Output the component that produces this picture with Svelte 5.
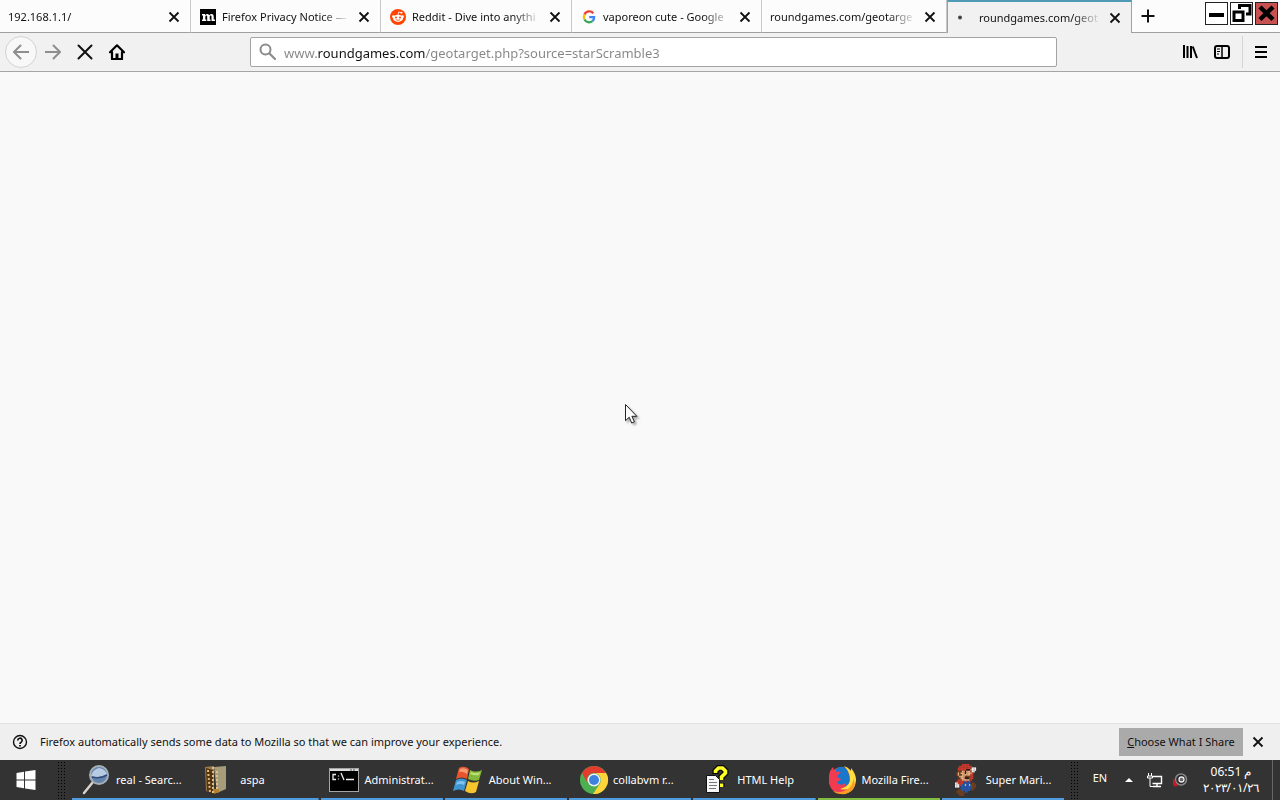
<script>
  const tabs = [
    { title: '192.168.1.1/', icon: '' },
    { title: 'Firefox Privacy Notice —', icon: 'mozilla' },
    { title: 'Reddit - Dive into anythi', icon: 'reddit' },
    { title: 'vaporeon cute - Google', icon: 'google' },
    { title: 'roundgames.com/geotarge', icon: '' },
    { title: 'roundgames.com/geot', icon: 'busy', active: true }
  ];
  const tasks = [
    { title: 'real - Searc...', icon: 'search', joined: true },
    { title: 'aspa', icon: 'archive' },
    { title: 'Administrat...', icon: 'cmd' },
    { title: 'About Win...', icon: 'windows' },
    { title: 'collabvm r...', icon: 'chrome' },
    { title: 'HTML Help', icon: 'help' },
    { title: 'Mozilla Fire...', icon: 'firefox', active: true },
    { title: 'Super Mari...', icon: 'mario' }
  ];
  const mario = [
    '.....rrrrr......',
    '...rrrrrrrrr....',
    '..rrrrrrrrrrwww.',
    '..rrrrrrkkkswww.',
    '..bbbssksssrww..',
    '.bsbssskssssr...',
    '.bsbbssssssrr...',
    '..bssssbbbbrr...',
    '....ssskkkrrr...',
    '..rrrsssssrr....',
    '.rrrrrurrur.....',
    'wwrrrruuuuu.bb..',
    'wwwrruuyuuyubbb.',
    'www.uuuuuuuubbb.',
    '....uuuuuuuubb..',
    '..bbbuuuuuu.b...',
    '.bbbbb.uu.......',
    '..bbbbb.........',
    '...bbb..........'
  ];
  const inks = { r: '#cf3a2c', w: '#f4eeee', b: '#74401f', s: '#eeb080', k: '#2a1610', u: '#2458b4', y: '#f6d743' };
  let url = $state('www.roundgames.com/geotarget.php?source=starScramble3');
</script>

{#snippet cross(size)}
  <svg width={size} height={size} viewBox="0 0 12 12" aria-hidden="true"><path d="M1.500 1.500l9 9M10.500 1.500l-9 9" stroke="#111" stroke-width="1.800" /></svg>
{/snippet}

<div class="screen">
  <header class="tabstrip">
    <div class="tabs">
      {#each tabs as tab}
        <div class="tab" class:active={tab.active}>
          <button class="tab-main">
            {#if tab.icon}
              <svg class="favicon" width="16" height="16" viewBox="0 0 16 16" aria-hidden="true">
                {#if tab.icon === 'mozilla'}
                  <path d="M0 0h16v16H0z" fill="#000" />
                  <path d="M2 5h3v1.200Q6.300 4.800 7.600 5q1.300.2 1.600 1.300Q10.500 4.800 12 5q1.700.2 1.700 2.200v3.300H15V12h-3.500V7.600q0-1-.8-1-1 0-1 1.400v2.500h.8V12H7.200V7.600q0-1-.8-1-1 0-1.100 1.400v2.500h1V12H2v-1.500h1V6.500H2z" fill="#fff" />
                {:else if tab.icon === 'reddit'}
                  <circle cx="8" cy="8" r="8" fill="#ff4500" />
                  <path d="M8 6l.7-3 2.500.6" fill="none" stroke="#fff" stroke-width=".8" />
                  <circle cx="11.500" cy="3.700" r="1" fill="#fff" />
                  <circle cx="3.500" cy="7.700" r="1.400" fill="#fff" />
                  <circle cx="12.500" cy="7.700" r="1.400" fill="#fff" />
                  <ellipse cx="8" cy="9.300" rx="5" ry="3.600" fill="#fff" />
                  <circle cx="6" cy="8.500" r="1" fill="#ff4500" />
                  <circle cx="10" cy="8.500" r="1" fill="#ff4500" />
                  <path d="M5.800 10.700q2.200 1.400 4.400 0" fill="none" stroke="#ff4500" stroke-width=".8" />
                {:else if tab.icon === 'google'}
                  <g fill="none" stroke-width="2.300">
                    <path d="M12.300 4.200A5.200 5.200 0 0 0 3.500 5.500" stroke="#ea4335" />
                    <path d="M3.500 5.500a5.200 5.200 0 0 0 0 5" stroke="#fbbc05" />
                    <path d="M3.500 10.500a5.200 5.200 0 0 0 7.900 1.700" stroke="#34a853" />
                    <path d="M11.400 12.200A5 5 0 0 0 13.100 8.200H8.200" stroke="#4285f4" />
                  </g>
                {:else}
                  <circle cx="3" cy="7.500" r="2" fill="#444" />
                {/if}
              </svg>
            {/if}
            <span class="tab-title">{tab.title}</span>
          </button>
          <button class="close" aria-label="Close tab">{@render cross(12)}</button>
        </div>
      {/each}
    </div>
    <div class="strip-end">
      <button class="new-tab" aria-label="New tab">
        <svg width="14" height="14" viewBox="0 0 14 14"><path d="M7 .5v13M.5 7h13" stroke="#111" stroke-width="2" /></svg>
      </button>
      <div class="window-buttons">
        <button aria-label="Minimize"><svg width="21" height="21" viewBox="0 0 21 21"><path d="M3 10h15v4H3z" /></svg></button>
        <button aria-label="Restore">
          <svg width="21" height="21" viewBox="0 0 21 21" fill="none" stroke="#000" stroke-width="3"><path d="M3 9h9v8.500H3z" /><path d="M8.500 6V2.500H19V11h-4" /></svg>
        </button>
        <button class="quit" aria-label="Close"><svg width="21" height="21" viewBox="0 0 21 21"><path d="M4 4l13 12.500M17 4L4 16.500" stroke="#000" stroke-width="4.500" /></svg></button>
      </div>
    </div>
  </header>

  <nav class="toolbar">
    <button class="tool back" aria-label="Back"><svg width="16" height="16" viewBox="0 0 16 16"><path d="M15.500 8H1.500M7.500 1.500L1 8l6.500 6.500" /></svg></button>
    <button class="tool forward" aria-label="Forward"><svg width="16" height="16" viewBox="0 0 16 16"><path d="M.5 8h14M8.500 1.500L15 8l-6.500 6.500" /></svg></button>
    <button class="tool" aria-label="Stop"><svg width="16" height="16" viewBox="0 0 16 16"><path d="M1.500 1.500l13 13M14.500 1.500l-13 13" stroke="#111" stroke-width="2" stroke-linecap="round" /></svg></button>
    <button class="tool" aria-label="Home">
      <svg width="16" height="16" viewBox="0 0 16 16"><path d="M1 8.300L8 1.300l7 7M3 8v7h10V8" fill="none" stroke="#000" stroke-width="2.200" stroke-linecap="round" stroke-linejoin="round" /><path d="M6.500 15V9.500h3V15z" /></svg>
    </button>
    <div class="spring"></div>
    <label class="urlbar">
      <svg width="18" height="18" viewBox="0 0 18 18" aria-hidden="true"><circle cx="6.500" cy="6.500" r="5" fill="none" stroke="#8b8b8b" stroke-width="2" /><path d="M10.500 10.500l5.500 5.500" stroke="#8b8b8b" stroke-width="2.200" stroke-linecap="round" /></svg>
      <input type="text" aria-label="Address" bind:value={url} spellcheck="false" />
    </label>
    <div class="spring"></div>
    <button class="tool" aria-label="Library">
      <svg width="16" height="16" viewBox="0 0 16 16" stroke="#000" stroke-width="2"><path d="M2 1v13M5.500 2v12M9 2v12" /><path d="M10.700 2.500l4.300 11.500" /></svg>
    </button>
    <button class="tool" aria-label="Sidebars">
      <svg width="16" height="16" viewBox="0 0 16 16" fill="none" stroke="#000"><rect x="1" y="2" width="14" height="12" rx="2" stroke-width="2" /><path d="M8 2v12" stroke-width="1.500" /><path d="M3 5h3M3 7.500h3M3 10h2" /></svg>
    </button>
    <div class="divider"></div>
    <button class="tool menu" aria-label="Menu"><svg width="16" height="16" viewBox="0 0 16 16"><path d="M2 3h12M2 8h12M2 13h12" stroke="#000" stroke-width="2" /></svg></button>
  </nav>

  <main>
    <svg class="cursor" width="17" height="24" viewBox="0 0 17 24" aria-hidden="true">
      <path d="M.5.5v16.200l3.700-3.500 2.500 5.800 2.700-1.200-2.500-5.500h5z" fill="#fff" stroke="#222" />
    </svg>
  </main>

  <section class="notice">
    <svg width="16" height="16" viewBox="0 0 16 16" fill="none" stroke="#111" aria-hidden="true"><circle cx="8" cy="8" r="6.500" stroke-width="1.400" /><path d="M5.800 6.500a2.200 2.200 0 1 1 3.300 1.800Q8 8.900 8 10" stroke-width="1.700" /><path d="M8 11v1.500" stroke-width="1.800" /></svg>
    <p>Firefox automatically sends some data to Mozilla so that we can improve your experience.</p>
    <button class="choose"><span><u>C</u>hoose What I Share</span></button>
    <button class="close" aria-label="Dismiss">{@render cross(12)}</button>
  </section>

  <footer class="taskbar">
    <button class="start" aria-label="Start">
      <svg width="20" height="20" viewBox="0 0 20 20" fill="#fff"><path d="M.5 3l7.500-1.200v7.700H.5zM9 1.600L19.500 0v9.500H9zM.5 10.500H8v7.700L.5 17zM9 10.500h10.500V20L9 18.400z" /></svg>
    </button>
    <div class="grip"></div>
    <div class="tasks">
      {#each tasks as task}
        <button class="task" class:active={task.active} class:joined={task.joined}>
          <svg width="32" height="32" viewBox="0 0 32 32" aria-hidden="true">
            {#if task.icon === 'search'}
              <path d="M13 18L4 29" stroke="#d8d4cc" stroke-width="2.500" stroke-linecap="round" />
              <circle cx="19" cy="11" r="9" fill="#6284ad" stroke="#a7b0b8" stroke-width="2" />
              <path d="M11 12q2-7 8-8 6 1 8 6-7 5-16 2z" fill="#b7cce2" />
              <path d="M12 13q8 2 15-2" fill="none" stroke="#334b7a" stroke-width="1.500" />
            {:else if task.icon === 'archive'}
              <path d="M1 3l9-1v27l-8-2z" fill="#9c7b50" />
              <path d="M10 3l12-1v23l-9 4z" fill="#a69c79" />
              <path d="M2 4l7 2v24l-6-3z" fill="#543411" />
              <path d="M4 6l2 22M9 3v26M13 7v21" stroke="#e1bf84" stroke-width="2" stroke-dasharray="2 2" />
              <path d="M10 25h5v3l-5 2z" fill="#b5822d" />
            {:else if task.icon === 'cmd'}
              <path d="M0 4h30v24H0z" fill="#a5a5a5" /><path d="M1 7h28v20H1z" fill="#000" />
              <path d="M1 5h28v2H1z" fill="#ddd" /><path d="M22 5v2M25 5v2" stroke="#555" />
              <path d="M7 10.500H4v5h3M9.500 11.500v1M9.500 14.500v1M12 9l3 7M17 15.500h8" fill="none" stroke="#eee" stroke-width="1.300" />
            {:else if task.icon === 'windows'}
              <path d="M6 4q5-3 10 1l-2 10q-5-3-11 0z" fill="#e8552d" />
              <path d="M17 6q6 3 12 0l-3 10q-5 2-11-1z" fill="#83b83b" />
              <path d="M3 16q5-3 11 0l-3 11q-5-3-11 0z" fill="#3e95d1" />
              <path d="M15 17q5 3 11 0l-3 11q-5 3-11-1z" fill="#f6c52d" />
              <path d="M7 5q4-2 8 1l-1 4q-4-3-8-2z" fill="#f69a70" />
              <path d="M18 8q4 2 9 0l-1 3q-4 1-9-1z" fill="#bedf72" />
              <path d="M4 18q5-2 8 0l-1 3q-4-2-8 0z" fill="#7fc4ee" />
            {:else if task.icon === 'chrome'}
              <circle cx="17" cy="16" r="14" fill="#4caf50" />
              <path d="M4.900 9A14 14 0 0 1 29.100 9H17a7 7 0 0 0-6.100 10.500z" fill="#e33b2e" />
              <path d="M29.100 9A14 14 0 0 1 16 30l7-10.500A7 7 0 0 0 17 9z" fill="#ffd43b" />
              <circle cx="17" cy="16" r="6.500" fill="#f4f4f4" /><circle cx="17" cy="16" r="5" fill="#3e82df" />
            {:else if task.icon === 'help'}
              <path d="M14.500 10V7l3-3h4l3 3v2l-4 4v3M20.500 19v4" fill="none" stroke="#050500" stroke-width="6" />
              <path d="M14.500 9V7l3-3h4l3 3v2l-4 4v3M20.500 19.500v3.500" fill="none" stroke="#ffff28" stroke-width="3.600" />
              <path d="M5.500 11.500h9l4 4v13h-13z" fill="#f7f7f7" stroke="#111" />
              <path d="M8 15.500h5M8 18.500h8M8 21.500h8M8 24.500h7" stroke="#777" />
            {:else if task.icon === 'firefox'}
              <circle cx="16" cy="16" r="13" fill="#f0503a" />
              <path d="M10 5q6-5 12 1l2 12q-5 7-11 4-5-6-3-17z" fill="#1a78cc" />
              <path d="M18 2q4 1 7 5v-3q5 6 5 12-1 13-13 14Q7 29 4 20q6 5 12 4 9-2 8-11-1-6-6-11z" fill="#ffe040" />
              <path d="M3 13q0-6 4-10 0 3 3 5 3-1 5 0l-3 3-1 2 4 2q-2 3-5 3 4 5 10 1-1 5-6 6 4 1 8 0-4 5-10 4Q2 26 3 13z" fill="#f23b50" />
              <path d="M7 27q8 3 15-2 6-5 5-11 4 8-1 12-5 5-11 4-5 0-8-3z" fill="#ff9a24" />
            {:else}
              {#each mario as line, y}
                {#each [...line] as ink, x}
                  {#if inks[ink]}<rect x={5 + x * 1.4} y={y * 1.68} width="1.500" height="1.780" fill={inks[ink]} />{/if}
                {/each}
              {/each}
            {/if}
          </svg>
          <span>{task.title}</span>
        </button>
      {/each}
    </div>
    <div class="grip tail"></div>
    <button class="lang">EN</button>
    <div class="tray">
      <button aria-label="Show hidden icons"><svg width="8" height="8" viewBox="0 0 8 8"><path d="M0 6l4-4 4 4z" fill="#fff" /></svg></button>
      <button aria-label="Network">
        <svg width="16" height="16" viewBox="0 0 16 16" fill="none" stroke="#fff"><path d="M6 4.500h8.500v7H5.500M10 12v2M6 14.500h8" stroke-width="1.400" /><path d="M1.500 1v3M4.500 1v3M.5 4h5v2h-5zM3 6v8.500h3" /></svg>
      </button>
      <button aria-label="Volume">
        <svg width="16" height="16" viewBox="0 0 16 16"><circle cx="8" cy="7.500" r="5.500" fill="#272727" stroke="#888" stroke-width="1.500" /><circle cx="8.500" cy="7.500" r="2.500" fill="#666" stroke="#eee" stroke-width="1.300" /><path d="M0 7q1 0 2 1 0 3 3 5-1 2-3 1.500-3-1-2-7.500z" fill="#c81828" /></svg>
      </button>
    </div>
    <button class="clock"><span>06:51 م</span><span>٢٠٢٣/٠١/٢٦</span></button>
    <button class="desktop" aria-label="Show desktop"></button>
  </footer>
</div>

<style>
  :global(body) { margin: 0; }
  .screen {
    display: flex;
    flex-direction: column;
    min-height: 100vh;
    background: #f9f9f9;
    color: #111;
    font: 11px/16px "Noto Sans", "Open Sans", sans-serif;
  }
  button {
    display: flex;
    align-items: center;
    justify-content: center;
    box-sizing: border-box;
    margin: 0;
    padding: 0;
    border: 0;
    background: none;
    color: inherit;
    font: inherit;
    white-space: nowrap;
  }
  svg { display: block; flex: none; }

  .tabstrip { display: flex; height: 33px; background: #fcfcfc; }
  .tabs {
    display: grid;
    flex: 1;
    min-width: 0;
    grid-template-columns: minmax(0, 191fr) minmax(0, 190fr) minmax(0, 191fr) minmax(0, 190fr) minmax(0, 185fr) minmax(0, 185fr);
  }
  .tab {
    display: flex;
    align-items: center;
    box-sizing: border-box;
    min-width: 0;
    padding: 1px 8px 0;
    border-right: 1px solid #c8c8c8;
    border-bottom: 1px solid #a0a0a0;
  }
  .tab.active {
    padding-top: 0;
    border-top: 2px solid #4f9bb5;
    border-bottom: 0;
    border-left: 1px solid #a0a0a0;
    border-right-color: #a0a0a0;
    background: #f1f1f1;
  }
  .tab-main { flex: 1; min-width: 0; justify-content: flex-start; gap: 6px; }
  .favicon { margin-left: 1px; }
  .tab-title {
    flex: 1;
    min-width: 0;
    overflow: hidden;
    text-align: left;
    mask-image: linear-gradient(to left, transparent, #000 28px);
  }
  .close { width: 16px; height: 24px; margin-left: 10px; }
  .tab .close { margin-left: 6px; }
  .strip-end {
    display: flex;
    justify-content: space-between;
    box-sizing: border-box;
    width: 148px;
    border-bottom: 1px solid #a0a0a0;
  }
  .new-tab { width: 32px; }
  .window-buttons { display: flex; gap: 2px; padding: 2px 2px 0 0; }
  .window-buttons button { width: 23px; height: 23px; border: 1px solid #222; background: #fff; }
  .window-buttons .quit { background: #c75050; }

  .toolbar {
    display: flex;
    align-items: center;
    box-sizing: border-box;
    height: 39px;
    padding: 0 3px 0 5px;
    border-bottom: 1px solid #a5a5a5;
    background: #f1f1f1;
  }
  .tool { flex: none; width: 32px; height: 32px; }
  .back { border: 1px solid #d2d2d2; border-radius: 50%; background: #f8f8f8; }
  .back path, .forward path { fill: none; stroke: #8e8e8e; stroke-width: 2; stroke-linecap: round; stroke-linejoin: round; }
  .spring { flex: 117; }
  .urlbar {
    display: flex;
    flex: 789;
    align-items: center;
    gap: 7px;
    box-sizing: border-box;
    min-width: 0;
    height: 30px;
    padding: 0 8px;
    border: 1px solid #a3a3a3;
    border-radius: 2px;
    background: #fff;
  }
  input {
    flex: 1;
    min-width: 0;
    padding: 2px 0 0;
    border: 0;
    outline: 0;
    background: linear-gradient(to right, #858585 33px, #111 33px, #111 141px, #858585 141px);
    background-clip: text;
    color: transparent;
    font: 13px/20px "Noto Sans", "Open Sans", sans-serif;
  }
  .divider { width: 1px; height: 32px; margin-left: 4px; background: #d5d5d5; }
  .menu { margin-left: 2px; }

  main { position: relative; flex: 1; }
  .cursor { position: absolute; left: 625px; top: 332px; filter: drop-shadow(2px 2px 1px #0005); }

  .notice {
    display: flex;
    align-items: center;
    box-sizing: border-box;
    height: 37px;
    padding: 0 14px 0 12px;
    border-top: 1px solid #e2e2e2;
    background: #efefef;
  }
  .notice p { flex: 1; margin: 0 12px; }
  .choose { width: 124px; height: 28px; background: #aaa; }
  .notice .close { margin-left: 7px; }

  .taskbar { display: flex; align-items: center; height: 40px; background: #333; color: #fff; }
  .start { width: 52px; height: 40px; }
  .grip {
    width: 10px;
    height: 38px;
    margin: 0 5px;
    background: radial-gradient(circle, #000 1px, transparent 1px) 0 0 / 3px 3px;
  }
  .grip.tail { margin: 0 4px; }
  .tasks { display: grid; flex: 1; min-width: 0; grid-template-columns: repeat(8, minmax(0, 1fr)); }
  .task {
    justify-content: flex-start;
    gap: 4px;
    height: 40px;
    padding: 0 0 0 8px;
    border-right: 2px solid #333;
    background: linear-gradient(#4f9de0, #4f9de0) bottom / 100% 2px no-repeat;
  }
  .task.joined { border-right: 0; }
  .task.active { background-image: linear-gradient(#80bd40, #80bd40); }
  .lang { width: 32px; height: 36px; align-items: flex-start; padding-top: 8px; }
  .tray { display: flex; }
  .tray button { width: 26px; height: 40px; }
  .clock { flex-direction: column; width: 78px; padding-right: 4px; font-size: 12px; }
  .desktop { width: 8px; height: 40px; border-left: 1px solid #666; }
</style>
